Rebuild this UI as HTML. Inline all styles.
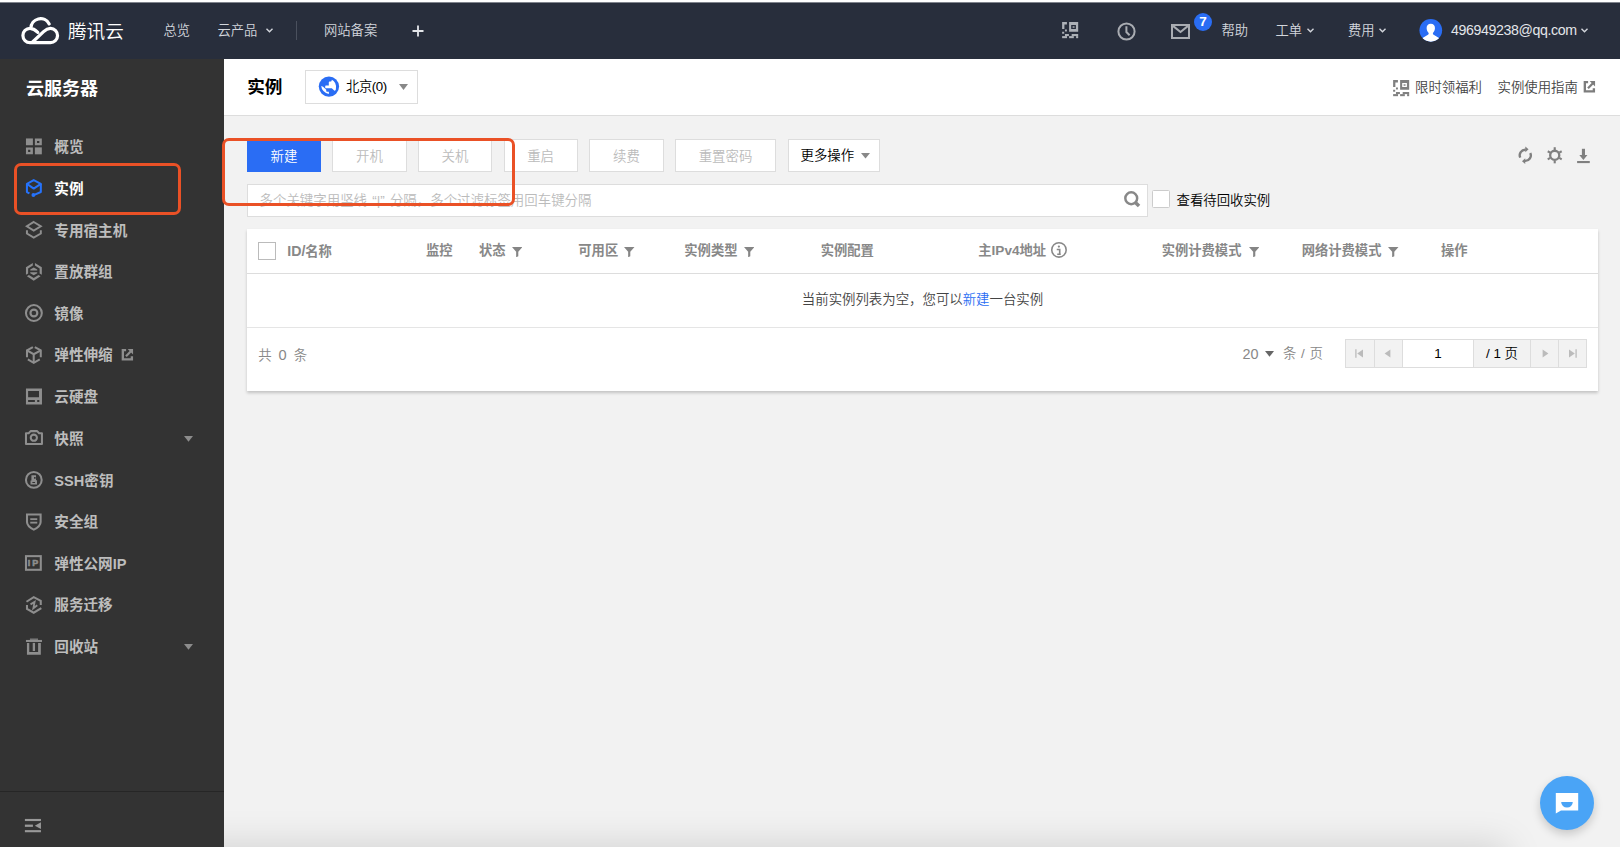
<!DOCTYPE html>
<html lang="zh-CN">
<head>
<meta charset="utf-8">
<title>实例 - 云服务器 - 控制台</title>
<style>
*{box-sizing:border-box;margin:0;padding:0}
html,body{width:1620px;height:847px;overflow:hidden;background:#f2f2f2}
body{font-family:"Liberation Sans","Noto Sans CJK SC",sans-serif;color:#444;position:relative;font-size:12.5px;font-weight:350}
.abs{position:absolute}
.topstrip{left:0;top:0;width:1620px;height:3px;background:linear-gradient(to bottom,#fff 0,#fff 2px,#80848d 2px,#80848d 3px);z-index:5}
.nav{left:0;top:2px;width:1620px;height:56.5px;background:#282e3c}
.nav .t{position:absolute;color:#d3d6dc;font-size:13.3px;line-height:20px;top:18.6px;white-space:nowrap}
.side{left:0;top:58.5px;width:224px;height:789px;background:#333}
.side .title{position:absolute;left:26px;top:18px;font-size:18px;font-weight:700;color:#fff;line-height:24px}
.it{left:54.3px;font-size:14.6px;font-weight:700;color:#bdbdbd;line-height:20px;white-space:nowrap}
.it.on{color:#fff}
.side svg{position:absolute}
.hdr{left:224px;top:58.5px;width:1396px;height:57px;background:#fff;border-bottom:1px solid #ddd}
.btn{position:absolute;top:139.2px;height:32.7px;border:1px solid #ddd;background:#fff;color:#bbb;font-size:13.4px;line-height:30.7px;padding-top:1.6px;text-align:center;white-space:nowrap}
.card{left:247px;top:228.5px;width:1351px;height:162px;background:#fff;box-shadow:0 2px 3px rgba(0,0,0,.2)}
.th{position:absolute;font-size:13.3px;font-weight:700;color:#888;line-height:20px;white-space:nowrap}
.red{position:absolute;border:3.4px solid #ea5126;border-radius:7px}
</style>
</head>
<body>
<div class="abs topstrip"></div>
<div class="abs nav" id="nav">
<svg class="abs" style="left:0;top:0" width="70" height="56" viewBox="0 2 70 56"><path d="M30 42.6 H50.3 A7.1 7.1 0 0 0 50.6 28.4 C47.6 28.3 45.6 29.7 43.6 31.6 L32.6 42 M30 42.6 A7.1 7.1 0 0 1 30 28.4 C33 28.4 35 29.6 37.8 32.4 M30.9 28.3 A9.7 9.7 0 0 1 49.2 23.9" fill="none" stroke="#fff" stroke-width="3.2" stroke-linecap="round" stroke-linejoin="round"/></svg>
<div class="t" style="left:68px;top:15.5px;font-size:18.6px;line-height:28px;color:#fff;font-weight:350">腾讯云</div>
<div class="t" style="left:163.5px">总览</div>
<div class="t" style="left:217.5px">云产品</div>
<svg class="abs" style="left:265px;top:25px" width="9" height="7" viewBox="0 0 9 7"><path d="M1.5 1.8 L4.5 4.8 L7.5 1.8" fill="none" stroke="#d3d6dc" stroke-width="1.4"/></svg>
<div class="abs" style="left:296px;top:19px;width:1px;height:19px;background:#4a505d"></div>
<div class="t" style="left:324px">网站备案</div>
<svg class="abs" style="left:412px;top:23px" width="12" height="12" viewBox="0 0 12 12"><path d="M6 0.5 V11.5 M0.5 6 H11.5" stroke="#e4e6ea" stroke-width="1.8"/></svg>
<svg class="abs" style="left:1054px;top:12px" width="40" height="32" viewBox="0 0 1059 847" fill="#adb1b7"><path d="M215 215 H342 V275 H275 V395 H215 Z"/><path d="M400 215 H640 V470 H400 Z M455 290 V395 H580 V290 Z" fill-rule="evenodd"/><rect x="492" y="320" width="52" height="50" opacity=".75"/><rect x="290" y="410" width="52" height="52"/><rect x="215" y="470" width="55" height="52"/><rect x="290" y="530" width="105" height="55"/><rect x="468" y="530" width="172" height="55"/><rect x="215" y="585" width="130" height="55"/><rect x="400" y="585" width="125" height="55"/><rect x="585" y="585" width="55" height="55"/></svg>
<svg class="abs" style="left:1116px;top:18.8px" width="21" height="21" viewBox="0 0 21 21"><circle cx="10.5" cy="10.5" r="8.1" fill="none" stroke="#a9acb2" stroke-width="2"/><path d="M10.4 5.2 V11 L13.6 14.2" fill="none" stroke="#a9acb2" stroke-width="2"/></svg>
<svg class="abs" style="left:1171px;top:21.5px" width="19" height="15" viewBox="0 0 19 15"><path d="M1 1 H18 V14 H1 Z M1.6 1.6 L9.5 8 L17.4 1.6" fill="none" stroke="#a9acb2" stroke-width="2"/></svg>
<div class="abs" style="left:1194px;top:11.3px;width:18px;height:18px;border-radius:9px;background:#2a6df4;color:#fff;font-size:13.5px;font-weight:700;line-height:18px;text-align:center">7</div>
<div class="t" style="left:1221.5px">帮助</div>
<div class="t" style="left:1275.5px">工单</div>
<svg class="abs" style="left:1305.5px;top:25px" width="9" height="7" viewBox="0 0 9 7"><path d="M1.5 1.8 L4.5 4.8 L7.5 1.8" fill="none" stroke="#d3d6dc" stroke-width="1.4"/></svg>
<div class="t" style="left:1348px">费用</div>
<svg class="abs" style="left:1377.5px;top:25px" width="9" height="7" viewBox="0 0 9 7"><path d="M1.5 1.8 L4.5 4.8 L7.5 1.8" fill="none" stroke="#d3d6dc" stroke-width="1.4"/></svg>
<svg class="abs" style="left:1410px;top:8px" width="60" height="40" viewBox="0 0 1270 847"><defs><clipPath id="avc"><circle cx="440" cy="430" r="240"/></clipPath></defs><circle cx="440" cy="430" r="240" fill="#2a6df4"/><g clip-path="url(#avc)" fill="#fff"><path d="M440 290 C500 290 530 330 528 385 C526 440 500 470 485 488 C482 505 488 515 500 522 L640 608 V700 H240 V608 L380 522 C392 515 398 505 395 488 C380 470 354 440 352 385 C350 330 380 290 440 290 Z"/></g></svg>
<div class="t" style="left:1451px;top:18.1px;font-size:14.2px;letter-spacing:-0.39px;color:#e4e6ea">496949238@qq.com</div>
<svg class="abs" style="left:1579.5px;top:25px" width="9" height="7" viewBox="0 0 9 7"><path d="M1.5 1.8 L4.5 4.8 L7.5 1.8" fill="none" stroke="#d3d6dc" stroke-width="1.4"/></svg>
</div>
<div class="abs side" id="side"></div>
<div id="sidec">
<div class="abs" style="left:26px;top:76.8px;font-size:18px;font-weight:700;color:#fff;line-height:24px;white-space:nowrap">云服务器</div>
<svg class="abs" style="left:20px;top:133px" width="28" height="28" viewBox="0 0 847 847"><g fill="#8e8e8e"><rect x="180" y="165" width="210" height="205"/><path d="M450 165 H660 V370 H450 Z M515 240 V302 H585 V240 Z" fill-rule="evenodd"/><path d="M180 435 H390 V645 H180 Z M245 510 V575 H312 V510 Z" fill-rule="evenodd"/><rect x="450" y="435" width="210" height="210"/></g></svg>
<div class="abs it" style="top:136.80px">概览</div>
<svg class="abs" style="left:20px;top:174px" width="28" height="28" viewBox="0 0 847 847"><g fill="none" stroke="#2673fb" stroke-width="62" stroke-linejoin="round"><path d="M415 185 L630 300 L415 440 L210 300 Z"/><path d="M210 300 V545 L285 588"/><path d="M630 300 V545 L415 640"/></g><circle cx="405" cy="635" r="58" fill="#2673fb"/></svg>
<div class="abs it on" style="top:179.37px">实例</div>
<svg class="abs" style="left:20px;top:216px" width="28" height="28" viewBox="0 0 847 847"><g fill="none" stroke="#8e8e8e" stroke-width="60" stroke-linejoin="miter"><path d="M415 182 L628 310 L415 440 L208 310 Z"/><path d="M210 430 V530 L415 652 L630 530 V430"/></g></svg>
<div class="abs it" style="top:220.84px">专用宿主机</div>
<svg class="abs" style="left:20px;top:258px" width="28" height="28" viewBox="0 0 847 847"><g fill="#8e8e8e"><path d="M388 150 L180 278 V505 L246 468 V315 L388 228 Z"/><path d="M452 150 L660 278 V505 L594 468 V315 L452 228 Z"/><path d="M210 555 L415 690 L622 555 L560 515 L415 608 L270 515 Z"/><path d="M415 290 L522 345 V378 H310 V345 Z"/><path d="M310 430 H522 V462 L415 522 L310 462 Z"/></g></svg>
<div class="abs it" style="top:262.11px">置放群组</div>
<svg class="abs" style="left:20px;top:299px" width="28" height="28" viewBox="0 0 847 847"><g fill="none" stroke="#8e8e8e"><circle cx="420" cy="424" r="240" stroke-width="62"/><circle cx="420" cy="424" r="104" stroke-width="66"/></g></svg>
<div class="abs it" style="top:304.08px">镜像</div>
<svg class="abs" style="left:20px;top:341px" width="28" height="28" viewBox="0 0 847 847"><g fill="none" stroke="#8e8e8e" stroke-width="62" stroke-linejoin="miter"><path d="M390 182 L212 285 V490"/><path d="M448 182 L628 285 V490"/><path d="M238 558 L415 660 L598 558"/><path d="M212 285 L415 400 L628 285 M415 400 V655"/></g></svg>
<div class="abs it" style="top:345.15px">弹性伸缩</div>
<svg class="abs" style="left:20px;top:382px" width="28" height="28" viewBox="0 0 847 847"><path d="M180 195 H665 V680 H180 Z M245 275 V465 H575 V275 Z M245 545 V605 H450 V545 Z M520 545 V605 H585 V545 Z" fill="#8e8e8e" fill-rule="evenodd"/></svg>
<div class="abs it" style="top:386.82px">云硬盘</div>
<svg class="abs" style="left:20px;top:424px" width="28" height="28" viewBox="0 0 847 847"><g fill="none" stroke="#8e8e8e" stroke-width="62"><path d="M181 281 H262 L322 216 H518 L578 281 H664 V604 H181 Z" stroke-linejoin="round"/><circle cx="418" cy="415" r="94"/></g></svg>
<div class="abs it" style="top:429.29px">快照</div>
<svg class="abs" style="left:20px;top:466px" width="28" height="28" viewBox="0 0 847 847"><circle cx="418" cy="420" r="238" fill="none" stroke="#8e8e8e" stroke-width="62"/><path d="M345 280 H485 V430 H515 V560 H318 V440 H345 Z M425 335 V385 H472 V335 Z M375 482 V512 H455 V482 Z" fill="#8e8e8e" fill-rule="evenodd"/></svg>
<div class="abs it" style="top:470.56px">SSH密钥</div>
<svg class="abs" style="left:20px;top:508px" width="28" height="28" viewBox="0 0 847 847"><path d="M212 197 H624 V420 C624 520 520 600 418 655 C316 600 212 520 212 420 Z" fill="none" stroke="#8e8e8e" stroke-width="62"/><g fill="#8e8e8e"><rect x="310" y="310" width="212" height="55"/><rect x="310" y="415" width="212" height="55"/></g></svg>
<div class="abs it" style="top:511.83px">安全组</div>
<svg class="abs" style="left:20px;top:549px" width="28" height="28" viewBox="0 0 847 847"><rect x="181" y="216" width="448" height="413" fill="none" stroke="#8e8e8e" stroke-width="62"/><text x="236" y="526" font-family="Liberation Sans, sans-serif" font-weight="700" font-size="272" textLength="318" lengthAdjust="spacing" fill="#8e8e8e" stroke="#8e8e8e" stroke-width="16">IP</text></svg>
<div class="abs it" style="top:553.50px">弹性公网IP</div>
<svg class="abs" style="left:20px;top:591px" width="28" height="28" viewBox="0 0 847 847"><g fill="none" stroke="#8e8e8e" stroke-width="62" stroke-linejoin="miter"><path d="M196 325 L415 185 L628 295 V425"/><path d="M211 425 V540 L415 658 L645 520"/></g><path d="M318 405 L442 330 L405 520 L522 428" fill="none" stroke="#8e8e8e" stroke-width="56"/></svg>
<div class="abs it" style="top:595.47px">服务迁移</div>
<svg class="abs" style="left:20px;top:632px" width="28" height="28" viewBox="0 0 847 847"><g fill="#8e8e8e"><rect x="180" y="240" width="485" height="62"/><rect x="300" y="196" width="245" height="44" opacity=".8"/><path d="M210 330 H280 V602 H548 V330 H630 V690 H210 Z"/><rect x="385" y="330" width="70" height="245"/></g></svg>
<div class="abs it" style="top:636.84px">回收站</div>
<svg class="abs" style="left:110px;top:340px" width="90" height="30" viewBox="0 0 1620 540"><path d="M290 181 H231 V349 H394 V292" fill="none" stroke="#8e8e8e" stroke-width="42"/><path d="M318 160 H415 V262 Z" fill="#8e8e8e"/><path d="M288 292 L385 195" stroke="#8e8e8e" stroke-width="40"/></svg>
<svg class="abs" style="left:183.6px;top:435.6px" width="9" height="6" viewBox="0 0 9 6"><path d="M0 0 H9 L4.5 5.8 Z" fill="#8c8c8c"/></svg>
<svg class="abs" style="left:183.6px;top:644.0px" width="9" height="6" viewBox="0 0 9 6"><path d="M0 0 H9 L4.5 5.8 Z" fill="#8c8c8c"/></svg>
<div class="abs" style="left:0;top:791px;width:224px;height:1px;background:#262626"></div>
<svg class="abs" style="left:10px;top:805px" width="60" height="40" viewBox="0 0 1270 847" fill="#999"><rect x="315" y="295" width="340" height="45"/><rect x="315" y="415" width="170" height="48"/><rect x="315" y="532" width="340" height="45"/><path d="M655 365 V510 L525 437 Z"/></svg>
</div>
<div class="abs hdr" id="hdr"></div>
<div class="abs" style="left:247.2px;top:75.4px;font-size:17.6px;font-weight:700;color:#000;line-height:24px;white-space:nowrap">实例</div>
<div class="abs" style="left:305px;top:70px;width:113px;height:33.5px;border:1px solid #ddd;background:#fff"></div>
<svg class="abs" style="left:312px;top:72px" width="34" height="28" viewBox="0 0 1028 847"><circle cx="512" cy="442" r="308" fill="#2a6df4"/><path d="M600 238 Q660 270 700 330 Q745 420 722 530 Q705 570 680 568 L598 490 H405 Q385 450 410 410 H508 V312 Q512 292 532 290 H578 Q596 280 600 238 Z M278 420 L335 445 L430 540 V585 Q435 600 452 600 H510 V662 Q420 650 345 575 Q285 500 278 420 Z" fill="#fff"/></svg>
<div class="abs" style="left:346px;top:76.5px;font-size:13.3px;color:#000;line-height:20px;white-space:nowrap;letter-spacing:-0.4px">北京(0)</div>
<svg class="abs" style="left:398.7px;top:84.2px" width="9" height="6" viewBox="0 0 9 6"><path d="M0 0 H9 L4.5 6 Z" fill="#888"/></svg>
<svg class="abs" style="left:1385.05px;top:71.87px" width="40" height="32" viewBox="0 0 1059 847" fill="#808080"><path d="M215 215 H342 V275 H275 V395 H215 Z"/><path d="M400 215 H640 V470 H400 Z M455 290 V395 H580 V290 Z" fill-rule="evenodd"/><rect x="492" y="320" width="52" height="50" opacity=".75"/><rect x="290" y="410" width="52" height="52"/><rect x="215" y="470" width="55" height="52"/><rect x="290" y="530" width="105" height="55"/><rect x="468" y="530" width="172" height="55"/><rect x="215" y="585" width="130" height="55"/><rect x="400" y="585" width="125" height="55"/><rect x="585" y="585" width="55" height="55"/></svg>
<div class="abs" style="left:1415px;top:77.7px;font-size:13.4px;color:#444;line-height:20px;white-space:nowrap">限时领福利</div>
<div class="abs" style="left:1497.5px;top:77.7px;font-size:13.4px;color:#444;line-height:20px;white-space:nowrap">实例使用指南</div>
<svg class="abs" style="left:1572.3px;top:71.9px" width="90" height="30" viewBox="0 0 1620 540"><path d="M290 181 H231 V349 H394 V292" fill="none" stroke="#7d7d7d" stroke-width="42"/><path d="M318 160 H415 V262 Z" fill="#7d7d7d"/><path d="M288 292 L385 195" stroke="#7d7d7d" stroke-width="40"/></svg>
<div id="tools">
<div class="btn" style="left:246.8px;width:74.2px;background:#2a6df4;border-color:#2a6df4;color:#fff;">新建</div>
<div class="btn" style="left:332.3px;width:74.3px;">开机</div>
<div class="btn" style="left:418px;width:74px;">关机</div>
<div class="btn" style="left:503.6px;width:74px;">重启</div>
<div class="btn" style="left:589.4px;width:74.2px;">续费</div>
<div class="btn" style="left:675px;width:101px;">重置密码</div>
<div class="btn" style="left:787.5px;width:92.5px;color:#000;text-align:left;padding-left:12px;padding-top:0.7px">更多操作</div>
<svg class="abs" style="left:861px;top:152.8px" width="9" height="6" viewBox="0 0 9 6"><path d="M0 0 H9 L4.5 5.6 Z" fill="#888"/></svg>
<svg class="abs" style="left:1510px;top:140px" width="90" height="30" viewBox="0 0 1620 540"><g fill="none" stroke="#808080" stroke-width="42"><path d="M184.4 317.3 A100 100 0 0 1 283.7 175.4"/><path d="M365.6 232.7 A100 100 0 0 1 266.3 374.6"/><circle cx="805" cy="275" r="82" stroke-width="42"/></g><g fill="#808080"><path d="M276 116 L334 168 L276 220 Z"/><path d="M274 330 L216 382 L274 434 Z"/><g transform="translate(805 275)"><rect x="-19" y="-145" width="38" height="50"/><rect x="-19" y="95" width="38" height="50"/><rect x="-19" y="-145" width="38" height="50" transform="rotate(60)"/><rect x="-19" y="-145" width="38" height="50" transform="rotate(120)"/><rect x="-19" y="-145" width="38" height="50" transform="rotate(240)"/><rect x="-19" y="-145" width="38" height="50" transform="rotate(300)"/></g><rect x="1294" y="158" width="56" height="125"/><path d="M1248 272 H1394 L1321 358 Z"/><rect x="1208" y="378" width="228" height="38"/></g></svg>
<div class="abs" style="left:247px;top:184px;width:900.7px;height:32.7px;border:1px solid #ddd;background:#fff"></div>
<div class="abs" style="left:259.5px;top:190.8px;font-size:13.45px;color:#bbb;line-height:20px;white-space:nowrap;word-spacing:1.5px">多个关键字用竖线 “|” 分隔，多个过滤标签用回车键分隔</div>
<svg class="abs" style="left:1110px;top:180px" width="80" height="40" viewBox="0 0 1620 810"><circle cx="430" cy="370" r="120" fill="none" stroke="#888" stroke-width="50"/><path d="M508 452 L588 528" stroke="#888" stroke-width="72"/></svg>
<div class="abs" style="left:1152.2px;top:190.1px;width:18.1px;height:18.1px;border:1.4px solid #ccc;border-radius:1.5px;background:#fff"></div>
<div class="abs" style="left:1176.5px;top:190.9px;font-size:13.4px;color:#000;line-height:20px;white-space:nowrap">查看待回收实例</div>
</div>
<div class="abs card" id="card">
<div class="abs" style="left:11.1px;top:13.7px;width:17.6px;height:17.6px;border:1px solid #bbb;background:#fff"></div>
<div class="th" style="left:40.2px;top:12.5px"><span style="font-size:14.2px">ID/</span>名称</div>
<div class="th" style="left:178.9px;top:12.5px">监控</div>
<div class="th" style="left:232px;top:12.5px">状态</div>
<div class="th" style="left:331.3px;top:12.5px">可用区</div>
<div class="th" style="left:437.3px;top:12.5px">实例类型</div>
<div class="th" style="left:573.7px;top:12.5px">实例配置</div>
<div class="th" style="left:731.3px;top:12.5px">主<span style="font-size:13.6px">IPv4</span>地址</div>
<div class="th" style="left:914.7px;top:12.5px">实例计费模式</div>
<div class="th" style="left:1054.7px;top:12.5px">网络计费模式</div>
<div class="th" style="left:1194px;top:12.5px">操作</div>
<svg class="abs" style="left:264.9px;top:18.5px" width="10.5" height="10.4" viewBox="0 0 10.5 10.4"><path d="M0 0 H10.5 L6.3 4.7 V9.2 L4.15 10.3 V4.7 Z" fill="#858585"/></svg>
<svg class="abs" style="left:377.0px;top:18.5px" width="10.5" height="10.4" viewBox="0 0 10.5 10.4"><path d="M0 0 H10.5 L6.3 4.7 V9.2 L4.15 10.3 V4.7 Z" fill="#858585"/></svg>
<svg class="abs" style="left:496.7px;top:18.5px" width="10.5" height="10.4" viewBox="0 0 10.5 10.4"><path d="M0 0 H10.5 L6.3 4.7 V9.2 L4.15 10.3 V4.7 Z" fill="#858585"/></svg>
<svg class="abs" style="left:1001.7px;top:18.5px" width="10.5" height="10.4" viewBox="0 0 10.5 10.4"><path d="M0 0 H10.5 L6.3 4.7 V9.2 L4.15 10.3 V4.7 Z" fill="#858585"/></svg>
<svg class="abs" style="left:1141.1px;top:18.5px" width="10.5" height="10.4" viewBox="0 0 10.5 10.4"><path d="M0 0 H10.5 L6.3 4.7 V9.2 L4.15 10.3 V4.7 Z" fill="#858585"/></svg>
<svg class="abs" style="left:783px;top:6.5px" width="60" height="30" viewBox="0 0 1620 810"><circle cx="782" cy="402" r="195" fill="none" stroke="#888" stroke-width="42"/><circle cx="780" cy="313" r="30" fill="#888"/><path d="M722 390 H802 V520 M735 520 H830" fill="none" stroke="#888" stroke-width="44" stroke-linejoin="miter"/></svg>
<div class="abs" style="left:0;top:44.1px;width:1351px;height:1.3px;background:#ddd"></div>
<div class="abs" style="left:0;top:61.3px;width:1351px;text-align:center;font-size:13.42px;color:#444;line-height:20px;white-space:nowrap">当前实例列表为空，您可以<span style="color:#2a6df4">新建</span>一台实例</div>
<div class="abs" style="left:0;top:98.7px;width:1351px;height:1px;background:#e5e5e5"></div>
<div class="abs" style="left:11.3px;top:116.10px;font-size:13.4px;color:#888;line-height:20px;white-space:nowrap;word-spacing:3.2px">共 <span style="font-size:14.6px">0</span> 条</div>
<div class="abs" style="left:995.6px;top:115.3px;font-size:14.4px;color:#888;line-height:20px;white-space:nowrap">20</div>
<svg class="abs" style="left:1018.3px;top:122.7px" width="9" height="6" viewBox="0 0 9 6"><path d="M0 0 H9 L4.5 5.8 Z" fill="#666"/></svg>
<div class="abs" style="left:1036px;top:115.4px;font-size:13.4px;color:#888;line-height:20px;white-space:nowrap;word-spacing:1px">条 / 页</div>
<div class="abs" style="left:1098.2px;top:110.7px;width:242px;height:28.6px;border:1px solid #ddd;background:#f2f2f2"></div>
<div class="abs" style="left:1154.7px;top:111.7px;width:72.4px;height:26.6px;background:#fff;border-left:1px solid #ddd;border-right:1px solid #ddd;text-align:center;font-size:13.4px;line-height:28px;color:#000">1</div>
<div class="abs" style="left:1126.7px;top:111.7px;width:1px;height:26.6px;background:#ddd"></div>
<div class="abs" style="left:1283px;top:111.7px;width:1px;height:26.6px;background:#ddd"></div>
<div class="abs" style="left:1310.7px;top:111.7px;width:1px;height:26.6px;background:#ddd"></div>
<div class="abs" style="left:1227px;top:111.7px;width:56px;text-align:center;font-size:13.4px;line-height:28px;color:#000;white-space:nowrap">/ 1 页</div>
<svg class="abs" style="left:1108.0px;top:120.8px" width="9" height="9" viewBox="0 0 9 9"><path d="M0.9 0.3 V8.7" stroke="#bbb" stroke-width="1.3"/><path d="M8 0.5 V8.5 L2.2 4.5 Z" fill="#bbb"/></svg>
<svg class="abs" style="left:1136.6px;top:120.8px" width="7" height="9" viewBox="0 0 7 9"><path d="M6.4 0.5 V8.5 L0.6 4.5 Z" fill="#bbb"/></svg>
<svg class="abs" style="left:1294.8px;top:120.8px" width="7" height="9" viewBox="0 0 7 9"><path d="M0.6 0.5 V8.5 L6.4 4.5 Z" fill="#bbb"/></svg>
<svg class="abs" style="left:1320.5px;top:120.8px" width="9" height="9" viewBox="0 0 9 9"><path d="M8.1 0.3 V8.7" stroke="#bbb" stroke-width="1.3"/><path d="M1 0.5 V8.5 L6.8 4.5 Z" fill="#bbb"/></svg>
</div>
<div id="float">
<div class="red" style="left:13.5px;top:162.7px;width:167px;height:52.2px"></div>
<div class="red" style="left:222.2px;top:138.2px;width:293px;height:68px"></div>
<div class="abs" style="left:224px;top:800px;width:1396px;height:47px;overflow:hidden"><div class="abs" style="left:-60px;top:58px;width:1330px;height:14px;box-shadow:0 0 36px 14px rgba(0,0,0,.13)"></div></div>
<div class="abs" style="left:1540px;top:776px;width:54px;height:54px;border-radius:27px;background:#4aa4f6;box-shadow:0 4px 10px rgba(0,0,0,.18)"></div>
<svg class="abs" style="left:1554px;top:792px" width="26" height="24" viewBox="0 0 26 24"><path d="M1.8 1 H24.2 V18.6 H7 L1.8 21.4 Z" fill="#fff"/><path d="M7.2 10 H18.8 A5.8 5.6 0 0 1 7.2 10 Z" fill="#4aa4f6"/></svg>
</div>
</body>
</html>
